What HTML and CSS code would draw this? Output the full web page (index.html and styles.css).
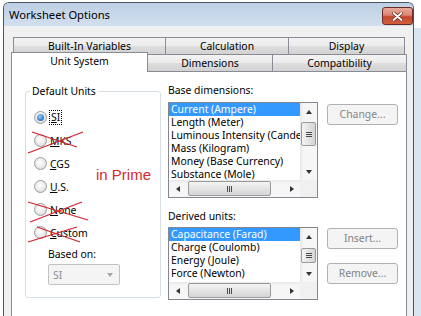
FILE: index.html
```html
<!DOCTYPE html>
<html>
<head>
    <meta charset="UTF-8">
    <title>Worksheet Options</title>
    <link rel="stylesheet" href="styles.css">
</head>
<body>

    <div class="l-window">
        <div class="titlebar">
            <span class="title">Worksheet Options</span>
            <span class="close">
                <svg width="11" height="9" viewBox="0 0 11 9">
                    <path d="M1.5 1 L9.5 8 M9.5 1 L1.5 8" stroke="#6E2A22" stroke-width="3.4" stroke-linecap="round"/>
                    <path d="M1.5 1 L9.5 8 M9.5 1 L1.5 8" stroke="#FFF" stroke-width="1.8" stroke-linecap="round"/>
                </svg>
            </span>
        </div>

        <div class="client">
            <div class="tabs">
                <div class="tabrow">
                    <div class="tab t-builtin">Built-In Variables</div>
                    <div class="tab t-calc">Calculation</div>
                    <div class="tab t-display">Display</div>
                </div>
                <div class="tabrow tabrow-front">
                    <div class="tab tab-active t-units">Unit System</div>
                    <div class="tab t-dims">Dimensions</div>
                    <div class="tab t-compat">Compatibility</div>
                </div>
            </div>

            <div class="pane">
                <div class="group">
                    <span class="group-title">Default Units</span>
                    <div class="radios">
                        <div class="radio-row"><span class="radio radio-on"></span><span class="focus"><u>S</u>I</span></div>
                        <div class="radio-row"><span class="radio"></span><span><u>M</u>KS</span></div>
                        <div class="radio-row"><span class="radio"></span><span><u>C</u>GS</span></div>
                        <div class="radio-row"><span class="radio"></span><span><u>U</u>.S.</span></div>
                        <div class="radio-row"><span class="radio"></span><span><u>N</u>one</span></div>
                        <div class="radio-row"><span class="radio"></span><span><u>C</u>ustom</span></div>
                    </div>
                    <div class="based">Based on:</div>
                    <div class="combo"><span>SI</span><span class="combo-arrow"></span></div>

                    <!-- crossed out options -->
                    <svg class="strikes" width="136" height="210">
                        <path d="M6 40 L51 55 M2 61 L57 40"/>
                        <path d="M2 110 L62 128 M4 130 L56 110"/>
                        <path d="M2 150 L51 135 M11 135 L54 150"/>
                    </svg>
                    <span class="note">in Prime</span>
                </div>

                <div class="dims">
                    <div class="caption">Base dimensions:</div>
                    <div class="list-row">
                        <div class="listbox list-base">
                            <div class="list-main">
                                <ul class="items">
                                    <li class="item-on">Current (Ampere)</li>
                                    <li>Length (Meter)</li>
                                    <li>Luminous Intensity (Candela)</li>
                                    <li>Mass (Kilogram)</li>
                                    <li>Money (Base Currency)</li>
                                    <li>Substance (Mole)</li>
                                </ul>
                                <div class="vscroll">
                                    <span class="sbtn"><i class="arr arr-up"></i></span>
                                    <span class="vthumb"><i class="grip-v"></i></span>
                                    <span class="sbtn sbtn-end"><i class="arr arr-down"></i></span>
                                </div>
                            </div>
                            <div class="hscroll-row">
                                <div class="hscroll">
                                    <span class="sbtn"><i class="arr arr-left"></i></span>
                                    <span class="hthumb"><i class="grip-h"></i></span>
                                    <span class="sbtn sbtn-end"><i class="arr arr-right"></i></span>
                                </div>
                                <span class="corner"></span>
                            </div>
                        </div>
                        <div class="buttons">
                            <div class="btn btn-change">Change...</div>
                        </div>
                    </div>

                    <div class="caption caption-derived">Derived units:</div>
                    <div class="list-row">
                        <div class="listbox list-derived">
                            <div class="list-main">
                                <ul class="items">
                                    <li class="item-on">Capacitance (Farad)</li>
                                    <li>Charge (Coulomb)</li>
                                    <li>Energy (Joule)</li>
                                    <li>Force (Newton)</li>
                                </ul>
                                <div class="vscroll">
                                    <span class="sbtn"><i class="arr arr-up"></i></span>
                                    <span class="vthumb"><i class="grip-v"></i></span>
                                    <span class="sbtn sbtn-end"><i class="arr arr-down"></i></span>
                                </div>
                            </div>
                            <div class="hscroll-row">
                                <div class="hscroll">
                                    <span class="sbtn"><i class="arr arr-left"></i></span>
                                    <span class="hthumb"><i class="grip-h"></i></span>
                                    <span class="sbtn sbtn-end"><i class="arr arr-right"></i></span>
                                </div>
                                <span class="corner"></span>
                            </div>
                        </div>
                        <div class="buttons">
                            <div class="btn btn-insert">Insert...</div>
                            <div class="btn btn-remove">Remove...</div>
                        </div>
                    </div>
                </div>
            </div>
        </div>
    </div>

</body>
</html>
```

FILE: styles.css
```css
HTML {
    overflow: hidden;
    }
BODY {
    margin: 0;
    padding: 2px 0 0 3px;
    width: 421px;
    height: 316px;
    box-sizing: border-box;
    overflow: hidden;
    background: linear-gradient(#D9E5F1, #D9E5F1) no-repeat right 0 top 28px / 7px 100%, #FFF;
    font: 10.4px/14px "Noto Sans", sans-serif;
    color: #000;
    }
UL {
    margin: 0;
    padding: 0;
    list-style: none;
    }
U {
    text-decoration-thickness: 1px;
    text-underline-offset: 1px;
    }

/* window frame */
.l-window {
    width: 411px;
    height: 314px;
    box-sizing: border-box;
    border: 1px solid #4B5562;
    border-bottom: 0;
    border-radius: 6px 6px 0 0;
    background: #F0F0F0;
    overflow: hidden;
    }
.titlebar {
    display: flex;
    justify-content: space-between;
    height: 23px;
    padding: 0 0 0 5px;
    background: linear-gradient(#BDCFE4, #C9D8EA 55%, #D2DFEE);
    }
.title {
    font-size: 11.2px;
    line-height: 24px;
    }
.close {
    display: flex;
    align-items: center;
    justify-content: center;
    width: 31px;
    height: 18px;
    margin-top: 4px;
    box-sizing: border-box;
    border: 1px solid #6B2A22;
    border-radius: 3px;
    background: linear-gradient(#E9AC9E, #DB8470 45%, #C7472F 55%, #D0603F);
    }
.client {
    padding: 11px 0 0 7px;
    }

/* tabs */
.tabrow {
    display: flex;
    align-items: flex-end;
    height: 18px;
    margin-left: 2px;
    }
.tabrow-front {
    margin-top: -1px;
    }
.tab {
    box-sizing: border-box;
    height: 18px;
    margin-left: -1px;
    border: 1px solid #898C95;
    background: linear-gradient(#F3F3F3, #EBEBEB 50%, #DEDEDE 50%, #D2D2D2);
    text-align: center;
    line-height: 16px;
    }
.t-builtin { width: 153px; margin-left: 0; }
.t-calc { width: 124px; }
.t-display { width: 117px; }
.t-units { width: 137px; margin-left: -2px; }
.t-dims { width: 126px; }
.t-compat { width: 135px; }
.tab-active {
    position: relative;
    z-index: 2;
    height: 20px;
    border-bottom: 0;
    background: #FFF;
    line-height: 17px;
    }
.pane {
    display: flex;
    align-items: flex-start;
    width: 396px;
    height: 245px;
    margin-top: -1px;
    padding-left: 13px;
    box-sizing: border-box;
    border: 1px solid #898C95;
    border-bottom: 0;
    background: #FFF;
    }

/* group box */
.group {
    position: relative;
    flex: none;
    width: 136px;
    height: 207px;
    margin-top: 19px;
    padding-left: 8px;
    box-sizing: border-box;
    border: 1px solid #D5DFE5;
    border-radius: 3px;
    }
.group-title {
    display: block;
    width: fit-content;
    margin: -8px 0 0 -4px;
    padding: 0 2px;
    background: #FFF;
    }
.radios {
    margin-top: 8px;
    }
.radio-row {
    display: flex;
    align-items: center;
    height: 23px;
    }
.radio {
    position: relative;
    width: 13px;
    height: 13px;
    margin-right: 3px;
    box-sizing: border-box;
    border: 1px solid #9C9C9C;
    border-radius: 50%;
    background: radial-gradient(circle at 45% 40%, #FFF, #F0F0F0 40%, #D2D2D2);
    }
.radio-on:after {
    content: "";
    position: absolute;
    top: 2px;
    left: 2px;
    width: 7px;
    height: 7px;
    border-radius: 50%;
    background: radial-gradient(circle at 40% 35%, #9DD0F5, #3D8AD3 55%, #174F92);
    }
.focus {
    padding: 0 1px;
    outline: 1px dotted #000;
    line-height: 13px;
    }
.based {
    margin: 3px 0 0 14px;
    }
.combo {
    display: flex;
    align-items: center;
    justify-content: space-between;
    width: 72px;
    height: 21px;
    margin: 3px 0 0 14px;
    padding: 0 6px 0 4px;
    box-sizing: border-box;
    border: 1px solid #C2C2C2;
    border-radius: 2px;
    background: #F4F4F4;
    color: #8D8D8D;
    }
.combo-arrow {
    border-left: 3.5px solid transparent;
    border-right: 3.5px solid transparent;
    border-top: 4px solid #A5A5A5;
    }
.strikes {
    position: absolute;
    top: 0;
    left: 0;
    overflow: visible;
    pointer-events: none;
    }
.strikes PATH {
    fill: none;
    stroke: #CF2430;
    stroke-width: 1.3;
    }
.note {
    position: absolute;
    top: 74px;
    left: 70px;
    font: 15px/18px "Liberation Sans", Arial, sans-serif;
    color: #D7282F;
    }

/* lists */
.dims {
    margin: 11px 0 0 7px;
    }
.caption-derived {
    margin-top: 11px;
    }
.list-row {
    display: flex;
    align-items: flex-start;
    margin-top: 5px;
    }
.caption-derived + .list-row {
    margin-top: 4px;
    }
.listbox {
    width: 150px;
    box-sizing: border-box;
    border: 1px solid #828790;
    background: #FFF;
    }
.list-main {
    display: flex;
    }
.items {
    flex: 1;
    overflow: hidden;
    }
.list-base .items { height: 77px; }
.list-derived .items { height: 54px; }
.items LI {
    height: 13px;
    padding-left: 2px;
    line-height: 13px;
    white-space: nowrap;
    }
.items .item-on {
    background: #3399FF;
    color: #FFF;
    }
.vscroll {
    display: flex;
    flex-direction: column;
    width: 17px;
    background: linear-gradient(to right, #E6E6E6, #F5F5F5 3px, #F7F7F7);
    }
.sbtn {
    display: flex;
    align-items: center;
    justify-content: center;
    flex: none;
    width: 17px;
    height: 17px;
    }
.sbtn-end {
    margin-top: auto;
    }
.hscroll .sbtn-end {
    margin-left: auto;
    margin-top: 0;
    }
.arr {
    width: 0;
    height: 0;
    }
.arr-up {
    border-left: 3.5px solid transparent;
    border-right: 3.5px solid transparent;
    border-bottom: 4px solid #333;
    }
.arr-down {
    border-left: 3.5px solid transparent;
    border-right: 3.5px solid transparent;
    border-top: 4px solid #333;
    }
.arr-left {
    border-top: 3.5px solid transparent;
    border-bottom: 3.5px solid transparent;
    border-right: 4px solid #333;
    }
.arr-right {
    border-top: 3.5px solid transparent;
    border-bottom: 3.5px solid transparent;
    border-left: 4px solid #333;
    }
.vthumb {
    display: flex;
    align-items: center;
    justify-content: center;
    width: 15px;
    margin-left: 1px;
    box-sizing: border-box;
    border: 1px solid #9A9A9A;
    border-radius: 2px;
    background: linear-gradient(to right, #F4F4F4, #E4E4E4 50%, #D4D4D4);
    }
.list-base .vthumb { height: 24px; margin-top: 2px; }
.list-derived .vthumb { height: 15px; margin-top: 3px; }
.grip-v {
    width: 6px;
    height: 5px;
    background: repeating-linear-gradient(#4A4A4A 0 1px, transparent 1px 2px);
    }
.hscroll-row {
    display: flex;
    }
.hscroll {
    display: flex;
    align-items: center;
    flex: 1;
    height: 17px;
    background: linear-gradient(#E6E6E6, #F5F5F5 3px, #F7F7F7);
    }
.hthumb {
    display: flex;
    align-items: center;
    justify-content: center;
    width: 83px;
    height: 15px;
    margin-left: 2px;
    box-sizing: border-box;
    border: 1px solid #9A9A9A;
    border-radius: 2px;
    background: linear-gradient(#F4F4F4, #E4E4E4 50%, #D4D4D4);
    }
.grip-h {
    width: 5px;
    height: 6px;
    background: repeating-linear-gradient(to right, #4A4A4A 0 1px, transparent 1px 2px);
    }
.corner {
    width: 17px;
    height: 17px;
    background: #F0F0F0;
    }

/* buttons */
.buttons {
    margin-left: 9px;
    }
.btn {
    width: 71px;
    height: 21px;
    box-sizing: border-box;
    border: 1px solid #ADB2B5;
    border-radius: 3px;
    background: #F4F4F4;
    color: #838383;
    text-align: center;
    line-height: 19px;
    }
.btn-change { margin-top: 2px; }
.btn-insert { margin-top: 1px; }
.btn-remove { margin-top: 14px; }
```
